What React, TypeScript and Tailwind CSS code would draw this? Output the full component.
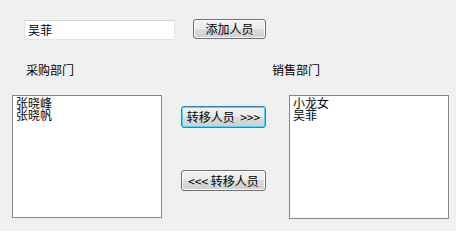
import React from 'react'

const btn =
  'flex items-center justify-center rounded-[3px] border text-[12px] leading-none text-black bg-[linear-gradient(to_bottom,#f2f2f2_0%,#ebebeb_50%,#dddddd_50%,#cfcfcf_100%)]'

export default function App() {
  const left = ['张晓峰', '张晓帆']
  const right = ['小龙女', '吴菲']

  return (
    <div className="w-[456px] h-[231px] overflow-hidden bg-[#f0f0f0] font-['Noto_Sans_CJK_SC','Noto_Sans',sans-serif] text-[12px] text-black">
      {/* name input + add */}
      <div className="flex items-start pt-[19px] pl-[24px]">
        <div className="mt-[1px] w-[151px] h-[20px] bg-white border border-[#e2e3ea] border-t-[#cfd1d6] flex items-center px-[3px] leading-none">
          吴菲
        </div>
        <button className={`${btn} ml-[18px] w-[73px] h-[20px] border-[#707070] shadow-[inset_0_0_0_1px_#fbfbfb]`}>
          添加人员
        </button>
      </div>

      {/* department labels */}
      <div className="flex mt-[22px] leading-[16px]">
        <span className="ml-[26px]">采购部门</span>
        <span className="ml-[198px]">销售部门</span>
      </div>

      {/* lists + transfer buttons */}
      <div className="flex items-start mt-[17px]">
        <div className="ml-[12px] w-[150px] h-[123px] bg-white border border-[#828790] px-[3px] pt-[1px] leading-[12px]">
          {left.map(n => (
            <div key={n}>{n}</div>
          ))}
        </div>

        <div className="ml-[19px] flex flex-col w-[85px]">
          <button className={`${btn} mt-[11px] h-[22px] border-[#3c7fb1] shadow-[inset_0_0_0_1px_#48d8fb]`}>
            转移人员&nbsp; &gt;&gt;&gt;
          </button>
          <button className={`${btn} mt-[42px] h-[21px] border-[#707070] shadow-[inset_0_0_0_1px_#fbfbfb]`}>
            &lt;&lt;&lt; 转移人员
          </button>
        </div>

        <div className="ml-[23px] w-[160px] h-[124px] bg-white border border-[#828790] px-[3px] pt-[1px] leading-[12px]">
          {right.map(n => (
            <div key={n}>{n}</div>
          ))}
        </div>
      </div>
    </div>
  )
}
